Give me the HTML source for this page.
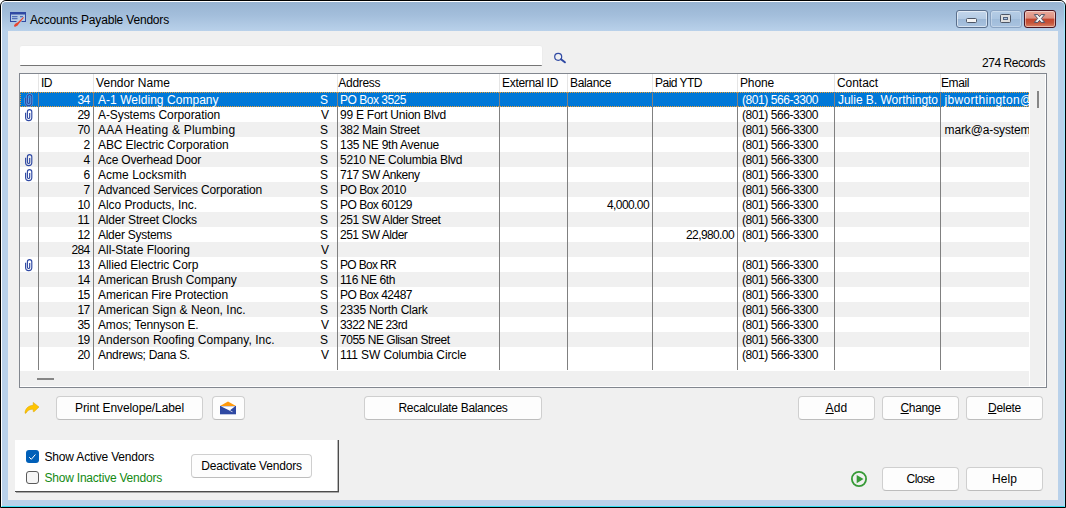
<!DOCTYPE html>
<html><head><meta charset="utf-8"><title>Accounts Payable Vendors</title>
<style>
html,body{margin:0;padding:0;background:#fff;}
body{width:1066px;height:508px;overflow:hidden;position:relative;font-family:"Liberation Sans", sans-serif;font-size:12px;color:#000;}
.a{position:absolute;}
.t{position:absolute;white-space:pre;}
#win{left:0;top:0;width:1064px;height:506px;border:1px solid #000;border-radius:6px 6px 0 0;background:#b9d1ea;overflow:hidden;}
#hl{left:0;top:0;width:1062px;height:504px;border-left:1px solid #fff;border-top:1px solid #fff;border-right:1px solid #9fe6fb;border-bottom:1px solid #35dff2;border-radius:5px 5px 0 0;}
#cap{left:1px;top:1px;width:1062px;height:29px;background:linear-gradient(#98b4d2,#a3bedb 45%,#b9d1ea);}
#client{left:8px;top:31px;width:1050px;height:469px;background:#f0f0f0;}
.btn{position:absolute;box-sizing:border-box;border:1px solid #cfcfcf;border-bottom-color:#bdbdbd;border-radius:4px;background:#fdfdfd;height:24px;}
.row{position:absolute;left:20px;width:1009px;height:15px;}
.vl{position:absolute;width:1px;background:#808080;top:92px;height:278px;}
.hl2{position:absolute;width:1px;background:#e5e5e5;top:74px;height:18px;}
</style></head><body>

<div id="win" class="a"><div id="cap" class="a"></div><div id="hl" class="a"></div></div>
<div id="client" class="a"></div>
<svg class="a" style="left:10px;top:12px" width="17" height="16" viewBox="0 0 17 16"><rect x="0" y="0" width="16" height="10" fill="rgba(214,228,246,.3)"/><path d="M0 0 H16 V10 H11.5 V9 H15 V2.5 H1 V9 H6.5 V10 H0 Z" fill="#2f49a3"/><rect x="2" y="4.2" width="5.5" height="1" fill="#3a57ae"/><rect x="2" y="6.2" width="5.5" height="1" fill="#3a57ae"/><rect x="10" y="4.2" width="3" height="1" fill="#3a57ae"/><path d="M13.3 5.1 L13.9 5.8 L9 11.6 L7.6 13.6 L5.4 14.7 L4 14.6 L4.2 12.9 L5.6 11.4 L7.6 10.6 Z" fill="#e8452f"/></svg>
<span class="t" style="top:13px;line-height:15px;letter-spacing:-0.185px;left:30px;">Accounts Payable Vendors</span>
<div class="a" style="left:956px;top:10px;width:32px;height:18px;box-sizing:border-box;border:1px solid #5a6f8c;border-radius:3px;background:linear-gradient(#c3d6eb 0,#b4cbe4 48%,#9db8d6 52%,#a9c3e0 100%);box-shadow:inset 0 0 0 1px rgba(255,255,255,.55)"></div>
<div class="a" style="left:966px;top:18px;width:11px;height:5px;box-sizing:border-box;border:1px solid #4d5666;border-radius:1.5px;background:#f4f4f4"></div>
<div class="a" style="left:990px;top:10px;width:32px;height:18px;box-sizing:border-box;border:1px solid #8aa3c2;border-radius:3px;background:linear-gradient(#b6cde6 0,#abc5e1 48%,#a0bcda 52%,#a9c3e0 100%);box-shadow:inset 0 0 0 1px rgba(255,255,255,.3)"></div>
<div class="a" style="left:1000px;top:14px;width:11px;height:9px;box-sizing:border-box;border:1px solid #4d5666;border-radius:1.5px;background:#dedede"></div>
<div class="a" style="left:1003px;top:17px;width:5px;height:3px;box-sizing:border-box;border:1px solid #53637f;background:#a9c3e0"></div>
<div class="a" style="left:1024px;top:10px;width:32px;height:18px;box-sizing:border-box;border:1px solid #4a1420;border-radius:3px;background:linear-gradient(#e9a99b 0,#dd8f7f 45%,#c4452e 50%,#c6553a 75%,#d98468 100%);box-shadow:inset 0 0 0 1px rgba(255,255,255,.45)"></div>
<svg class="a" style="left:1033px;top:13px" width="14" height="12" viewBox="0 0 14 12"><path d="M1.3 1.6 L4.9 1.6 L6.5 3.7 L8.1 1.6 L11.7 1.6 L8.4 5.5 L11.7 9.4 L8.1 9.4 L6.5 7.3 L4.9 9.4 L1.3 9.4 L4.6 5.5 Z" fill="#f6f6f6" stroke="#4b5266" stroke-width="1" stroke-linejoin="round"/></svg>

<div class="a" style="left:20px;top:46px;width:522px;height:19px;background:#fff;border-bottom:1px solid #757575;border-radius:2px 2px 1px 1px;box-shadow:0 -1px 0 #ececec,1px 0 0 #ececec"></div>
<svg class="a" style="left:553px;top:51px" width="14" height="14" viewBox="0 0 14 14"><circle cx="5.2" cy="5.8" r="3.5" fill="none" stroke="#2f49a3" stroke-width="1.2"/><path d="M8 8.3 L11.9 11.3" stroke="#2f49a3" stroke-width="2" stroke-linecap="round"/></svg>
<span class="t" style="top:56px;line-height:15px;letter-spacing:-0.459px;left:982px;">274 Records</span>
<div class="a" style="left:19px;top:73px;width:1026px;height:313px;border:1px solid #82878f;background:#fff"></div>
<div class="a" style="left:1030px;top:74px;width:15px;height:312px;background:#f0f0f0"></div>
<div class="a" style="left:20px;top:371px;width:1009px;height:15px;background:#f0f0f0"></div>
<div class="a" style="left:1037px;top:91px;width:2px;height:17px;background:#868686"></div>
<div class="a" style="left:37px;top:378px;width:17px;height:2px;background:#868686"></div>
<div class="row" style="top:92px;background:#0078d7;box-sizing:border-box;border:1px dotted #f0a030"></div>
<div class="row" style="top:122px;background:#f0f0f0"></div>
<div class="row" style="top:152px;background:#f0f0f0"></div>
<div class="row" style="top:182px;background:#f0f0f0"></div>
<div class="row" style="top:212px;background:#f0f0f0"></div>
<div class="row" style="top:242px;background:#f0f0f0"></div>
<div class="row" style="top:272px;background:#f0f0f0"></div>
<div class="row" style="top:302px;background:#f0f0f0"></div>
<div class="row" style="top:332px;background:#f0f0f0"></div>
<div class="vl" style="left:38px"></div>
<div class="hl2" style="left:38px"></div>
<div class="vl" style="left:93px"></div>
<div class="hl2" style="left:93px"></div>
<div class="vl" style="left:337px"></div>
<div class="hl2" style="left:337px"></div>
<div class="vl" style="left:499px"></div>
<div class="hl2" style="left:499px"></div>
<div class="vl" style="left:567px"></div>
<div class="hl2" style="left:567px"></div>
<div class="vl" style="left:652px"></div>
<div class="hl2" style="left:652px"></div>
<div class="vl" style="left:737px"></div>
<div class="hl2" style="left:737px"></div>
<div class="vl" style="left:834px"></div>
<div class="hl2" style="left:834px"></div>
<div class="vl" style="left:940px"></div>
<div class="hl2" style="left:940px"></div>
<span class="t" style="top:76px;line-height:15px;letter-spacing:-0.500px;left:41px;">ID</span>
<span class="t" style="top:76px;line-height:15px;letter-spacing:0.055px;left:96px;">Vendor Name</span>
<span class="t" style="top:76px;line-height:15px;letter-spacing:-0.290px;left:338.3px;">Address</span>
<span class="t" style="top:76px;line-height:15px;letter-spacing:-0.305px;left:502px;">External ID</span>
<span class="t" style="top:76px;line-height:15px;letter-spacing:-0.339px;left:570px;">Balance</span>
<span class="t" style="top:76px;line-height:15px;letter-spacing:-0.518px;left:655px;">Paid YTD</span>
<span class="t" style="top:76px;line-height:15px;letter-spacing:-0.141px;left:740px;">Phone</span>
<span class="t" style="top:76px;line-height:15px;letter-spacing:-0.051px;left:837px;">Contact</span>
<span class="t" style="top:76px;line-height:15px;letter-spacing:-0.403px;left:941px;">Email</span>
<svg class="a" style="left:24px;top:93px" width="10" height="14" viewBox="0 0 10 14"><path d="M1.6 4.8 V9.5 A3.1 3.1 0 0 0 7.8 9.5 V3.8 A2.2 2.2 0 0 0 3.4 3.8 V9.3 A1.15 1.15 0 0 0 5.7 9.3 V5" fill="none" stroke="#6db3f2" stroke-width="2.6" opacity=".8"/><path d="M1.6 4.8 V9.5 A3.1 3.1 0 0 0 7.8 9.5 V3.8 A2.2 2.2 0 0 0 3.4 3.8 V9.3 A1.15 1.15 0 0 0 5.7 9.3 V5" fill="none" stroke="#2f49a3" stroke-width="1.15"/></svg>
<span class="t" style="top:93px;line-height:15px;letter-spacing:-0.680px;left:77.5px;color:#fff;">34</span>
<span class="t" style="top:93px;line-height:15px;letter-spacing:0.040px;left:98px;color:#fff;">A-1 Welding Company</span>
<span class="t" style="top:93px;line-height:15px;letter-spacing:-2.016px;left:320px;color:#fff;">S</span>
<span class="t" style="top:93px;line-height:15px;letter-spacing:-0.490px;left:340px;color:#fff;">PO Box 3525</span>
<span class="t" style="top:93px;line-height:15px;letter-spacing:-0.433px;left:742px;color:#fff;">(801) 566-3300</span>
<span class="t" style="top:93px;line-height:15px;letter-spacing:-0.026px;left:838px;color:#fff;">Julie B. Worthingto</span>
<div class="a" style="left:941px;top:92px;width:88px;height:15px;overflow:hidden"><span class="t" style="top:1px;line-height:15px;letter-spacing:0.317px;left:3.5px;color:#fff;">jbworthington@</span></div>
<svg class="a" style="left:24px;top:108px" width="10" height="14" viewBox="0 0 10 14"><path d="M1.6 4.8 V9.5 A3.1 3.1 0 0 0 7.8 9.5 V3.8 A2.2 2.2 0 0 0 3.4 3.8 V9.3 A1.15 1.15 0 0 0 5.7 9.3 V5" fill="none" stroke="#2f49a3" stroke-width="1.15"/></svg>
<span class="t" style="top:108px;line-height:15px;letter-spacing:-0.680px;left:77.5px;">29</span>
<span class="t" style="top:108px;line-height:15px;letter-spacing:-0.088px;left:98px;">A-Systems Corporation</span>
<span class="t" style="top:108px;line-height:15px;letter-spacing:-1.016px;left:321px;">V</span>
<span class="t" style="top:108px;line-height:15px;letter-spacing:-0.236px;left:340px;">99 E Fort Union Blvd</span>
<span class="t" style="top:108px;line-height:15px;letter-spacing:-0.433px;left:742px;">(801) 566-3300</span>
<span class="t" style="top:123px;line-height:15px;letter-spacing:-0.680px;left:77.5px;">70</span>
<span class="t" style="top:123px;line-height:15px;letter-spacing:0.211px;left:98px;">AAA Heating &amp; Plumbing</span>
<span class="t" style="top:123px;line-height:15px;letter-spacing:-2.016px;left:320px;">S</span>
<span class="t" style="top:123px;line-height:15px;letter-spacing:-0.348px;left:340px;">382 Main Street</span>
<span class="t" style="top:123px;line-height:15px;letter-spacing:-0.433px;left:742px;">(801) 566-3300</span>
<div class="a" style="left:941px;top:122px;width:88px;height:15px;overflow:hidden"><span class="t" style="top:1px;line-height:15px;letter-spacing:-0.118px;left:3.5px;">mark@a-system</span></div>
<span class="t" style="top:138px;line-height:15px;letter-spacing:-0.688px;left:83.5px;">2</span>
<span class="t" style="top:138px;line-height:15px;letter-spacing:-0.120px;left:98px;">ABC Electric Corporation</span>
<span class="t" style="top:138px;line-height:15px;letter-spacing:-2.016px;left:320px;">S</span>
<span class="t" style="top:138px;line-height:15px;letter-spacing:-0.247px;left:340px;">135 NE 9th Avenue</span>
<span class="t" style="top:138px;line-height:15px;letter-spacing:-0.433px;left:742px;">(801) 566-3300</span>
<svg class="a" style="left:24px;top:153px" width="10" height="14" viewBox="0 0 10 14"><path d="M1.6 4.8 V9.5 A3.1 3.1 0 0 0 7.8 9.5 V3.8 A2.2 2.2 0 0 0 3.4 3.8 V9.3 A1.15 1.15 0 0 0 5.7 9.3 V5" fill="none" stroke="#2f49a3" stroke-width="1.15"/></svg>
<span class="t" style="top:153px;line-height:15px;letter-spacing:-0.688px;left:83.5px;">4</span>
<span class="t" style="top:153px;line-height:15px;letter-spacing:-0.180px;left:98px;">Ace Overhead Door</span>
<span class="t" style="top:153px;line-height:15px;letter-spacing:-2.016px;left:320px;">S</span>
<span class="t" style="top:153px;line-height:15px;letter-spacing:-0.243px;left:340px;">5210 NE Columbia Blvd</span>
<span class="t" style="top:153px;line-height:15px;letter-spacing:-0.433px;left:742px;">(801) 566-3300</span>
<svg class="a" style="left:24px;top:168px" width="10" height="14" viewBox="0 0 10 14"><path d="M1.6 4.8 V9.5 A3.1 3.1 0 0 0 7.8 9.5 V3.8 A2.2 2.2 0 0 0 3.4 3.8 V9.3 A1.15 1.15 0 0 0 5.7 9.3 V5" fill="none" stroke="#2f49a3" stroke-width="1.15"/></svg>
<span class="t" style="top:168px;line-height:15px;letter-spacing:-0.688px;left:83.5px;">6</span>
<span class="t" style="top:168px;line-height:15px;letter-spacing:0.026px;left:98px;">Acme Locksmith</span>
<span class="t" style="top:168px;line-height:15px;letter-spacing:-2.016px;left:320px;">S</span>
<span class="t" style="top:168px;line-height:15px;letter-spacing:-0.453px;left:340px;">717 SW Ankeny</span>
<span class="t" style="top:168px;line-height:15px;letter-spacing:-0.433px;left:742px;">(801) 566-3300</span>
<span class="t" style="top:183px;line-height:15px;letter-spacing:-0.688px;left:83.5px;">7</span>
<span class="t" style="top:183px;line-height:15px;letter-spacing:-0.164px;left:98px;">Advanced Services Corporation</span>
<span class="t" style="top:183px;line-height:15px;letter-spacing:-2.016px;left:320px;">S</span>
<span class="t" style="top:183px;line-height:15px;letter-spacing:-0.508px;left:340px;">PO Box 2010</span>
<span class="t" style="top:183px;line-height:15px;letter-spacing:-0.433px;left:742px;">(801) 566-3300</span>
<span class="t" style="top:198px;line-height:15px;letter-spacing:-0.680px;left:77.5px;">10</span>
<span class="t" style="top:198px;line-height:15px;letter-spacing:-0.055px;left:98px;">Alco Products, Inc.</span>
<span class="t" style="top:198px;line-height:15px;letter-spacing:-2.016px;left:320px;">S</span>
<span class="t" style="top:198px;line-height:15px;letter-spacing:-0.505px;left:340px;">PO Box 60129</span>
<span class="t" style="top:198px;line-height:15px;letter-spacing:-0.590px;left:607px;">4,000.00</span>
<span class="t" style="top:198px;line-height:15px;letter-spacing:-0.433px;left:742px;">(801) 566-3300</span>
<span class="t" style="top:213px;line-height:15px;letter-spacing:-0.234px;left:77.5px;">11</span>
<span class="t" style="top:213px;line-height:15px;letter-spacing:-0.205px;left:98px;">Alder Street Clocks</span>
<span class="t" style="top:213px;line-height:15px;letter-spacing:-2.016px;left:320px;">S</span>
<span class="t" style="top:213px;line-height:15px;letter-spacing:-0.433px;left:340px;">251 SW Alder Street</span>
<span class="t" style="top:213px;line-height:15px;letter-spacing:-0.433px;left:742px;">(801) 566-3300</span>
<span class="t" style="top:228px;line-height:15px;letter-spacing:-0.680px;left:77.5px;">12</span>
<span class="t" style="top:228px;line-height:15px;letter-spacing:-0.274px;left:98px;">Alder Systems</span>
<span class="t" style="top:228px;line-height:15px;letter-spacing:-2.016px;left:320px;">S</span>
<span class="t" style="top:228px;line-height:15px;letter-spacing:-0.506px;left:340px;">251 SW Alder</span>
<span class="t" style="top:228px;line-height:15px;letter-spacing:-0.599px;left:686px;">22,980.00</span>
<span class="t" style="top:228px;line-height:15px;letter-spacing:-0.433px;left:742px;">(801) 566-3300</span>
<span class="t" style="top:243px;line-height:15px;letter-spacing:-0.677px;left:71.5px;">284</span>
<span class="t" style="top:243px;line-height:15px;letter-spacing:-0.003px;left:98px;">All-State Flooring</span>
<span class="t" style="top:243px;line-height:15px;letter-spacing:-1.016px;left:321px;">V</span>
<svg class="a" style="left:24px;top:258px" width="10" height="14" viewBox="0 0 10 14"><path d="M1.6 4.8 V9.5 A3.1 3.1 0 0 0 7.8 9.5 V3.8 A2.2 2.2 0 0 0 3.4 3.8 V9.3 A1.15 1.15 0 0 0 5.7 9.3 V5" fill="none" stroke="#2f49a3" stroke-width="1.15"/></svg>
<span class="t" style="top:258px;line-height:15px;letter-spacing:-0.680px;left:77.5px;">13</span>
<span class="t" style="top:258px;line-height:15px;letter-spacing:-0.049px;left:98px;">Allied Electric Corp</span>
<span class="t" style="top:258px;line-height:15px;letter-spacing:-2.016px;left:320px;">S</span>
<span class="t" style="top:258px;line-height:15px;letter-spacing:-0.668px;left:340px;">PO Box RR</span>
<span class="t" style="top:258px;line-height:15px;letter-spacing:-0.433px;left:742px;">(801) 566-3300</span>
<span class="t" style="top:273px;line-height:15px;letter-spacing:-0.680px;left:77.5px;">14</span>
<span class="t" style="top:273px;line-height:15px;letter-spacing:-0.062px;left:98px;">American Brush Company</span>
<span class="t" style="top:273px;line-height:15px;letter-spacing:-2.016px;left:320px;">S</span>
<span class="t" style="top:273px;line-height:15px;letter-spacing:-0.416px;left:340px;">116 NE 6th</span>
<span class="t" style="top:273px;line-height:15px;letter-spacing:-0.433px;left:742px;">(801) 566-3300</span>
<span class="t" style="top:288px;line-height:15px;letter-spacing:-0.680px;left:77.5px;">15</span>
<span class="t" style="top:288px;line-height:15px;letter-spacing:-0.085px;left:98px;">American Fire Protection</span>
<span class="t" style="top:288px;line-height:15px;letter-spacing:-2.016px;left:320px;">S</span>
<span class="t" style="top:288px;line-height:15px;letter-spacing:-0.505px;left:340px;">PO Box 42487</span>
<span class="t" style="top:288px;line-height:15px;letter-spacing:-0.433px;left:742px;">(801) 566-3300</span>
<span class="t" style="top:303px;line-height:15px;letter-spacing:-0.680px;left:77.5px;">17</span>
<span class="t" style="top:303px;line-height:15px;letter-spacing:0.011px;left:98px;">American Sign &amp; Neon, Inc.</span>
<span class="t" style="top:303px;line-height:15px;letter-spacing:-2.016px;left:320px;">S</span>
<span class="t" style="top:303px;line-height:15px;letter-spacing:-0.189px;left:340px;">2335 North Clark</span>
<span class="t" style="top:303px;line-height:15px;letter-spacing:-0.433px;left:742px;">(801) 566-3300</span>
<span class="t" style="top:318px;line-height:15px;letter-spacing:-0.680px;left:77.5px;">35</span>
<span class="t" style="top:318px;line-height:15px;letter-spacing:-0.163px;left:98px;">Amos; Tennyson E.</span>
<span class="t" style="top:318px;line-height:15px;letter-spacing:-1.016px;left:321px;">V</span>
<span class="t" style="top:318px;line-height:15px;letter-spacing:-0.572px;left:340px;">3322 NE 23rd</span>
<span class="t" style="top:318px;line-height:15px;letter-spacing:-0.433px;left:742px;">(801) 566-3300</span>
<span class="t" style="top:333px;line-height:15px;letter-spacing:-0.680px;left:77.5px;">19</span>
<span class="t" style="top:333px;line-height:15px;letter-spacing:0.024px;left:98px;">Anderson Roofing Company, Inc.</span>
<span class="t" style="top:333px;line-height:15px;letter-spacing:-2.016px;left:320px;">S</span>
<span class="t" style="top:333px;line-height:15px;letter-spacing:-0.467px;left:340px;">7055 NE Glisan Street</span>
<span class="t" style="top:333px;line-height:15px;letter-spacing:-0.433px;left:742px;">(801) 566-3300</span>
<span class="t" style="top:348px;line-height:15px;letter-spacing:-0.680px;left:77.5px;">20</span>
<span class="t" style="top:348px;line-height:15px;letter-spacing:-0.301px;left:98px;">Andrews; Dana S.</span>
<span class="t" style="top:348px;line-height:15px;letter-spacing:-1.016px;left:321px;">V</span>
<span class="t" style="top:348px;line-height:15px;letter-spacing:-0.120px;left:340px;">111 SW Columbia Circle</span>
<span class="t" style="top:348px;line-height:15px;letter-spacing:-0.433px;left:742px;">(801) 566-3300</span>
<svg class="a" style="left:24px;top:402px" width="16" height="12" viewBox="0 0 16 12"><path d="M9.2 0.4 L15 5 L10 9.8 L9.2 9.6 L9.2 7.3 C6 7 3.5 8.2 2 11.2 L1 11.2 C1 7 4 3.6 9.2 3.3 Z" fill="#ffc400" stroke="#d9a400" stroke-width="0.5" stroke-linejoin="round"/></svg>
<div class="btn" style="left:56px;top:396px;width:147px;height:24px"></div>
<span class="t" style="top:401px;line-height:15px;letter-spacing:-0.087px;left:75px;">Print Envelope/Label</span>
<div class="btn" style="left:212px;top:396px;width:33px;height:24px"></div>
<svg class="a" style="left:220px;top:401px" width="16" height="14" viewBox="0 0 16 14"><path d="M0 5 L8 0.6 L16 5 Z" fill="#ff9a0d"/><rect x="0" y="5" width="16" height="8.3" fill="#2f49a3"/><path d="M0.8 5.3 L15.2 5.3 L10 9.2 L12.7 10.8 L12.3 11.3 L9.4 9.6 Z" fill="#fff"/></svg>
<div class="btn" style="left:364px;top:396px;width:178px;height:24px"></div>
<span class="t" style="top:401px;line-height:15px;letter-spacing:-0.320px;left:398.5px;">Recalculate Balances</span>
<div class="btn" style="left:798px;top:396px;width:77px;height:24px"></div>
<span class="t" style="top:401px;line-height:15px;letter-spacing:0.214px;left:825.5px;"><u>A</u>dd</span>
<div class="btn" style="left:882px;top:396px;width:77px;height:24px"></div>
<span class="t" style="top:401px;line-height:15px;letter-spacing:-0.341px;left:900.5px;"><u>C</u>hange</span>
<div class="btn" style="left:966px;top:396px;width:77px;height:24px"></div>
<span class="t" style="top:401px;line-height:15px;letter-spacing:-0.281px;left:988px;"><u>D</u>elete</span>
<div class="btn" style="left:882px;top:467px;width:77px;height:24px"></div>
<span class="t" style="top:472px;line-height:15px;letter-spacing:-0.537px;left:906.5px;">Close</span>
<div class="btn" style="left:966px;top:467px;width:77px;height:24px"></div>
<span class="t" style="top:472px;line-height:15px;letter-spacing:0.078px;left:992px;">Help</span>
<svg class="a" style="left:851px;top:471px" width="16" height="16" viewBox="0 0 16 16"><circle cx="8" cy="8" r="7.1" fill="none" stroke="#379a37" stroke-width="1.8"/><path d="M5.7 3.9 L12.5 8 L5.7 12.2 Z" fill="#379a37"/></svg>
<div class="a" style="left:15px;top:440px;width:323px;height:51px;background:#fff"></div>
<div class="a" style="left:337px;top:440px;width:1px;height:52px;background:#b8b8b8"></div>
<div class="a" style="left:338px;top:440px;width:1px;height:53px;background:#4c4c4c"></div>
<div class="a" style="left:15px;top:491px;width:324px;height:1px;background:#4c4c4c"></div>
<div class="a" style="left:16px;top:492px;width:323px;height:1px;background:#a8a8a8"></div>
<div class="a" style="left:26px;top:450px;width:13px;height:13px;box-sizing:border-box;border-radius:3px;background:#005fb8"></div>
<svg class="a" style="left:26px;top:450px" width="13" height="13" viewBox="0 0 13 13"><path d="M3.2 7.2 L5.3 9.3 L9.4 4.5" fill="none" stroke="#fff" stroke-width="1"/></svg>
<div class="a" style="left:26px;top:471px;width:13px;height:13px;box-sizing:border-box;border-radius:3px;border:1px solid #5a5a5a;background:#f5f5f5"></div>
<span class="t" style="top:450px;line-height:15px;letter-spacing:-0.170px;left:44.5px;">Show Active Vendors</span>
<span class="t" style="top:471px;line-height:15px;letter-spacing:-0.218px;left:44.5px;color:#138a13;">Show Inactive Vendors</span>
<div class="btn" style="left:191px;top:454px;width:121px;height:24px"></div>
<span class="t" style="top:459px;line-height:15px;letter-spacing:-0.198px;left:201.25px;">Deactivate Vendors</span>
</body></html>
